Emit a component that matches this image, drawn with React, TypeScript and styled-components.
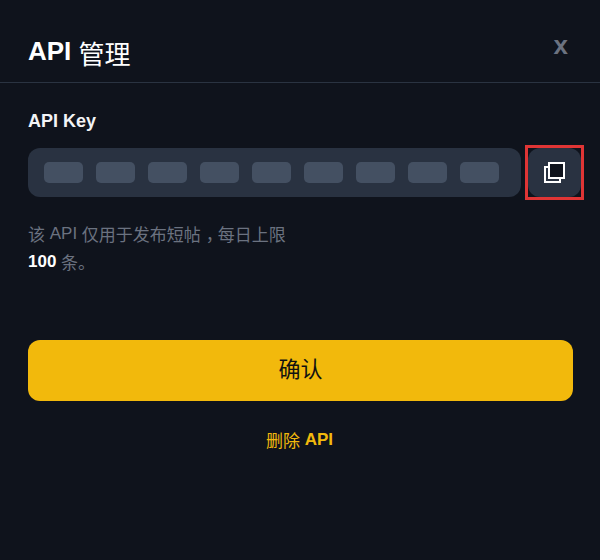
import styled, { createGlobalStyle } from 'styled-components';

const GlobalStyle = createGlobalStyle`
	html, body {
		margin: 0;
		padding: 0;
		background: #0f131c;
	}
	* {
		box-sizing: border-box;
	}
`;

const keySlots = [0, 1, 2, 3, 4, 5, 6, 7, 8];

const App = () => {
	return (
		<>
			<GlobalStyle />
			<Modal>
				<Header>
					<Title>
						API <TitleCjk>管理</TitleCjk>
					</Title>
					<CloseButton>x</CloseButton>
				</Header>
				<Body>
					<KeyLabel>API Key</KeyLabel>
					<KeyRow>
						<KeyField>
							{keySlots.map((slot) => (
								<KeySlot key={slot} />
							))}
						</KeyField>
						<CopyButton aria-label='copy'>
							<svg width='21' height='21' viewBox='0 0 21 21'>
								<rect x='1' y='5' width='15' height='15' fill='#293241' stroke='#fff' strokeWidth='2' />
								<rect x='5' y='1' width='15' height='15' fill='#0f131c' stroke='#fff' strokeWidth='2' />
							</svg>
						</CopyButton>
					</KeyRow>
					<Description>
						<Cjk>该</Cjk> API <Cjk>仅用于发布短帖<Comma>，</Comma>每日上限</Cjk>
						<br />
						<strong>100</strong> <Cjk>条。</Cjk>
					</Description>
					<ConfirmButton>确认</ConfirmButton>
					<DeleteLink>
						<Cjk>删除</Cjk> <strong>API</strong>
					</DeleteLink>
				</Body>
			</Modal>
		</>
	);
};

export default App;

const Modal = styled.div`
	width: 600px;
	height: 560px;
	overflow: hidden;
	background: #0f131c;
	font-family: 'Liberation Sans', 'Noto Sans CJK SC', sans-serif;
`;

const Header = styled.div`
	height: 83px;
	padding: 0 32px 0 28px;
	display: flex;
	justify-content: space-between;
	align-items: flex-start;
	border-bottom: 1px solid #2a3341;
`;

const Title = styled.h2`
	margin: 36px 0 0;
	height: 30px;
	font-size: 26px;
	line-height: 30px;
	font-weight: 700;
	color: #fff;
`;

const TitleCjk = styled.span`
	font-weight: 400;
	vertical-align: -4px;
`;

const CloseButton = styled.button`
	margin-top: 30px;
	padding: 0;
	border: 0;
	background: none;
	font-family: inherit;
	font-size: 26px;
	line-height: 30px;
	font-weight: 700;
	color: #6b7280;
`;

const Body = styled.div`
	padding: 26px 27px 0 28px;
`;

const KeyLabel = styled.div`
	font-size: 18px;
	line-height: 24px;
	font-weight: 700;
	color: #f3f4f6;
`;

const KeyRow = styled.div`
	margin-top: 15px;
	width: 553px;
	display: flex;
	gap: 7px;
`;

const KeyField = styled.div`
	width: 493px;
	height: 49px;
	padding: 0 16px;
	display: flex;
	align-items: center;
	gap: 13px;
	border-radius: 12px;
	background: #293241;
`;

const KeySlot = styled.div`
	width: 39px;
	height: 21px;
	border-radius: 5px;
	background: #445062;
`;

const CopyButton = styled.button`
	position: relative;
	width: 53px;
	height: 49px;
	padding: 0;
	display: flex;
	align-items: center;
	justify-content: center;
	border: 0;
	border-radius: 12px;
	background: #293241;

	&::after {
		content: '';
		position: absolute;
		inset: -3px;
		border: 3px solid #e03535;
	}
`;

const Description = styled.p`
	margin: 24px 0 0;
	height: 56px;
	font-size: 17px;
	line-height: 26px;
	color: #6b7280;

	strong {
		color: #fff;
	}
`;

const Cjk = styled.span`
	vertical-align: -2px;
`;

const Comma = styled.span`
	margin-left: 5px;
	letter-spacing: -5px;
`;

const ConfirmButton = styled.button`
	display: block;
	width: 545px;
	height: 61px;
	margin-top: 63px;
	padding: 0 0 8px;
	border: 0;
	border-radius: 12px;
	background: #f2b90c;
	font-family: inherit;
	font-size: 22px;
	color: #111;
`;

const DeleteLink = styled.div`
	margin-top: 27px;
	width: 543px;
	height: 24px;
	text-align: center;
	font-size: 17px;
	line-height: 24px;
	color: #f2b90c;
`;
